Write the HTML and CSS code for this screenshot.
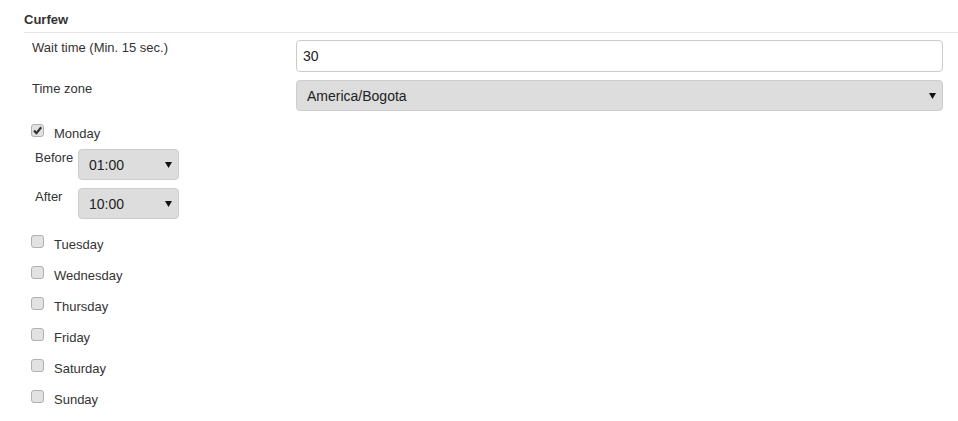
FILE: index.html
```html
<!DOCTYPE html>
<html>
<head>
<meta charset="utf-8">
<link rel="stylesheet" href="styles.css">
</head>
<body>
<div class="page">
  <div class="section-title">Curfew</div>
  <div class="form">
    <div class="row row-wait">
      <div class="label">Wait time (Min. 15 sec.)</div>
      <div class="control"><div class="input">30</div></div>
    </div>
    <div class="row row-tz">
      <div class="label label-tz">Time zone</div>
      <div class="control">
        <div class="select select-wide"><span>America/Bogota</span><svg class="arrow" width="7" height="6" viewBox="0 0 7 6"><path d="M0 0H7L3.5 6Z" fill="#111"/></svg></div>
      </div>
    </div>

    <div class="day day-first">
      <span class="check checked"><svg width="11" height="11" viewBox="0 0 11 11"><path d="M2 5.6L4.5 8.1L9.2 2.2" fill="none" stroke="#333" stroke-width="2.2"/></svg></span>
      <span class="day-name">Monday</span>
    </div>
    <div class="time-row time-before">
      <div class="time-label">Before</div>
      <div class="select select-small"><span>01:00</span><svg class="arrow" width="7" height="6" viewBox="0 0 7 6"><path d="M0 0H7L3.5 6Z" fill="#111"/></svg></div>
    </div>
    <div class="time-row time-after">
      <div class="time-label">After</div>
      <div class="select select-small"><span>10:00</span><svg class="arrow" width="7" height="6" viewBox="0 0 7 6"><path d="M0 0H7L3.5 6Z" fill="#111"/></svg></div>
    </div>

    <div class="day day-rest"><span class="check"></span><span class="day-name">Tuesday</span></div>
    <div class="day"><span class="check"></span><span class="day-name">Wednesday</span></div>
    <div class="day"><span class="check"></span><span class="day-name">Thursday</span></div>
    <div class="day"><span class="check"></span><span class="day-name">Friday</span></div>
    <div class="day"><span class="check"></span><span class="day-name">Saturday</span></div>
    <div class="day"><span class="check"></span><span class="day-name">Sunday</span></div>
  </div>
</div>
</body>
</html>
```

FILE: styles.css
```css
html, body {
  margin: 0;
  padding: 0;
  background: #fff;
}
body {
  font-family: "Liberation Sans", Arial, sans-serif;
  font-size: 13px;
  color: #333;
}
.page {
  padding-left: 24px;
}
.section-title {
  font-weight: bold;
  font-size: 13px;
  line-height: 16px;
  padding-top: 12px;
  padding-bottom: 4px;
  border-bottom: 1px solid #e5e5e5;
  color: #333;
}
.form {
  padding-left: 8px;
  padding-right: 15px;
}
.row {
  display: flex;
  align-items: flex-start;
}
.row-wait {
  margin-top: 7px;
}
.row-tz {
  margin-top: 8px;
}
.label {
  width: 264px;
  flex: none;
  line-height: 16px;
}
.label-tz {
  padding-top: 1px;
}
.control {
  flex: 1;
}
.input {
  box-sizing: border-box;
  height: 32px;
  border: 1px solid #ccc;
  border-radius: 4px;
  padding: 0 6px;
  font-size: 14px;
  line-height: 30px;
  color: #222;
  background: #fff;
}
.select {
  box-sizing: border-box;
  display: flex;
  align-items: center;
  justify-content: space-between;
  background: #ddd;
  border: 1px solid #ccc;
  border-radius: 4px;
  font-size: 14px;
  color: #222;
}
.select-wide {
  height: 31px;
  padding: 0 6px 0 10px;
}
.select-small {
  width: 101px;
  height: 31px;
  padding: 0 6px 0 10px;
}
.arrow {
  flex: none;
}
.day {
  display: flex;
  align-items: flex-start;
  height: 31px;
}
.day-first {
  margin-top: 14px;
  height: 16px;
}
.day-rest {
  margin-top: 17px;
}
.check {
  box-sizing: border-box;
  width: 13px;
  height: 13px;
  margin-left: -1px;
  margin-top: -1px;
  border: 1px solid #b0b0b0;
  border-radius: 3px;
  background: #e2e2e2;
  display: flex;
  align-items: center;
  justify-content: center;
  flex: none;
}
.day-name {
  margin-left: 10px;
  line-height: 16px;
  padding-top: 1px;
}
.time-row {
  display: flex;
  align-items: flex-start;
}
.time-before {
  margin-top: 8px;
}
.time-after {
  margin-top: 8px;
}
.time-label {
  width: 43px;
  padding-left: 3px;
  padding-top: 1px;
  line-height: 16px;
}
```
